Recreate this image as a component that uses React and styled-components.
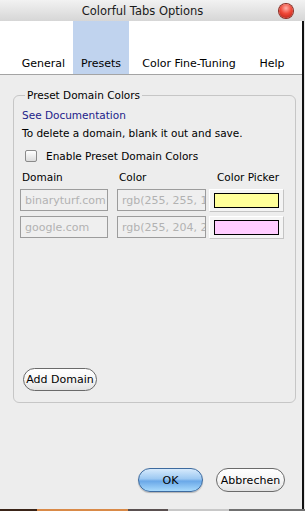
import React from "react";
import styled, { createGlobalStyle } from "styled-components";

const Global = createGlobalStyle`
  html, body { margin: 0; padding: 0; background: #ededed; }
  body { font-family: "DejaVu Sans", "Liberation Sans", sans-serif; font-size: 10.5px; color: #000; }
`;

const Window = styled.div`
  width: 305px;
  height: 511px;
  display: flex;
  flex-direction: column;
  overflow: hidden;
  background: #ededed;
`;

const TitleBar = styled.div`
  height: 21px;
  display: grid;
  grid-template-columns: 1fr auto 1fr;
  align-items: center;
  background: linear-gradient(#f2f2f2, #d6d6d6);
  font-size: 11.5px;
  color: #1a1a1a;
  span { grid-column: 2; margin-right: 20px; }
`;

const CloseDot = styled.div`
  grid-column: 3;
  justify-self: end;
  margin-right: 12px;
  width: 14px;
  height: 14px;
  border-radius: 50%;
  background: radial-gradient(circle at 50% 30%, #ffb0a8 0%, #f04a3a 45%, #b01a10 100%);
  box-shadow: 0 0 0 1px #8a2a20;
`;

const Body = styled.div`
  flex: 1;
  display: flex;
`;

const Content = styled.div`
  width: 302px;
  display: flex;
  flex-direction: column;
`;

const RightEdge = styled.div`
  width: 2px;
  background: #111;
  border-right: 1px solid #e6e6e6;
`;

const TabBar = styled.div`
  height: 53px;
  display: flex;
  padding-left: 14px;
  background: #fff;
  border-bottom: 1px solid #a4a4a4;
`;

const Tab = styled.div`
  width: ${(p) => p.$w}px;
  display: flex;
  align-items: flex-end;
  justify-content: center;
  padding-bottom: 4px;
  box-sizing: border-box;
  font-size: 11px;
  background: ${(p) => (p.$active ? "#c0d3ee" : "transparent")};
`;

const Panel = styled.div`
  flex: 1;
  display: flex;
  flex-direction: column;
  padding: 14px 14px 0 13px;
`;

const Group = styled.fieldset`
  margin: 0;
  border: 1px solid #c6c6c6;
  border-radius: 6px;
  padding: 0 6px;
  legend {
    padding: 0 2px;
    margin-left: 5px;
    font-size: 10.5px;
  }
`;

const GroupBody = styled.div`
  height: 301px;
  display: flex;
  flex-direction: column;
  padding-top: 7px;
  box-sizing: border-box;
  padding-bottom: 11px;
`;

const Link = styled.div`
  color: #1c1c8a;
  margin: 1px 0 0 2px;
  height: 13px;
`;

const Line = styled.div`
  margin: 5px 0 0 2px;
  height: 13px;
`;

const CheckRow = styled.label`
  display: flex;
  align-items: center;
  gap: 9px;
  margin: 9px 0 0 5px;
  height: 13px;
`;

const Box = styled.span`
  width: 10px;
  height: 10px;
  border: 1px solid #8a8a8a;
  border-radius: 2px;
  background: linear-gradient(#fff, #dcdcdc);
`;

const Grid = styled.div`
  display: grid;
  grid-template-columns: 88px 89px 74px;
  column-gap: 9px;
  row-gap: 4px;
  margin-top: 9px;
`;

const Head = styled.div`
  height: 14px;
  padding-left: 2px;
`;

const Field = styled.div`
  height: 22px;
  box-sizing: border-box;
  border: 1px solid #9c9c9c;
  background: #efefef;
  color: #b2b2b2;
  font-size: 11px;
  padding: 0 4px;
  display: flex;
  align-items: center;
  overflow: hidden;
  white-space: nowrap;
`;

const Picker = styled.div`
  height: 23px;
  margin-left: -6px;
  width: 75px;
  box-sizing: border-box;
  padding: 3px 4px;
  background: #f4f4f4;
  border: 1px solid;
  border-color: #fff #c4c4c4 #c4c4c4 #fff;
  display: flex;
`;

const Swatch = styled.div`
  flex: 1;
  border: 1px solid #000;
  background: ${(p) => p.$c};
`;

const Spacer = styled.div`
  flex: 1;
`;

const PillButton = styled.button`
  font-family: inherit;
  font-size: 11px;
  height: ${(p) => p.$h || 23}px;
  width: ${(p) => p.$w}px;
  padding: 0;
  border-radius: 12px;
  color: #000;
  border: 1px solid ${(p) => (p.$primary ? "#3d6a9e" : "#6a6a6a")};
  background: ${(p) =>
    p.$primary
      ? "linear-gradient(#d6eafc 0%, #9cc8f2 45%, #6aa8e8 55%, #a8dafc 100%)"
      : "linear-gradient(#ffffff 0%, #f6f6f6 50%, #e2e2e2 100%)"};
  box-shadow: ${(p) => (p.$primary ? "0 1px 1px rgba(0,0,0,0.25)" : "none")};
`;

const AddRow = styled.div`
  padding-left: 3px;
`;

const Footer = styled.div`
  display: flex;
  justify-content: flex-end;
  gap: 13px;
  padding-right: 3px;
  margin-bottom: 17px;
`;

const Desktop = styled.div`
  height: 2px;
  background: linear-gradient(90deg, #3a2418 0 12%, #d98a48 12% 42%, #5a5050 42% 55%, #c8c8c8 55% 75%, #707070 75% 100%);
`;

const rows = [
  { domain: "binaryturf.com", color: "rgb(255, 255, 153)", swatch: "#ffff99" },
  { domain: "google.com", color: "rgb(255, 204, 255)", swatch: "#ffccff" },
];

export default function App() {
  return (
    <Window>
      <Global />
      <TitleBar>
        <span>Colorful Tabs Options</span>
        <CloseDot />
      </TitleBar>
      <Body>
        <Content>
          <TabBar>
            <Tab $w={59}>General</Tab>
            <Tab $w={56} $active>Presets</Tab>
            <Tab $w={120}>Color Fine-Tuning</Tab>
            <Tab $w={46}>Help</Tab>
          </TabBar>
          <Panel>
            <Group>
              <legend>Preset Domain Colors</legend>
              <GroupBody>
                <Link>See Documentation</Link>
                <Line>To delete a domain, blank it out and save.</Line>
                <CheckRow>
                  <Box />
                  Enable Preset Domain Colors
                </CheckRow>
                <Grid>
                  <Head>Domain</Head>
                  <Head>Color</Head>
                  <Head>Color Picker</Head>
                  {rows.map((r) => (
                    <React.Fragment key={r.domain}>
                      <Field>{r.domain}</Field>
                      <Field>{r.color}</Field>
                      <Picker>
                        <Swatch $c={r.swatch} />
                      </Picker>
                    </React.Fragment>
                  ))}
                </Grid>
                <Spacer />
                <AddRow>
                  <PillButton $w={74}>Add Domain</PillButton>
                </AddRow>
              </GroupBody>
            </Group>
            <Spacer />
            <Footer>
              <PillButton $w={65} $h={24} $primary>OK</PillButton>
              <PillButton $w={69} $h={24}>Abbrechen</PillButton>
            </Footer>
          </Panel>
        </Content>
        <RightEdge />
      </Body>
      <Desktop />
    </Window>
  );
}
